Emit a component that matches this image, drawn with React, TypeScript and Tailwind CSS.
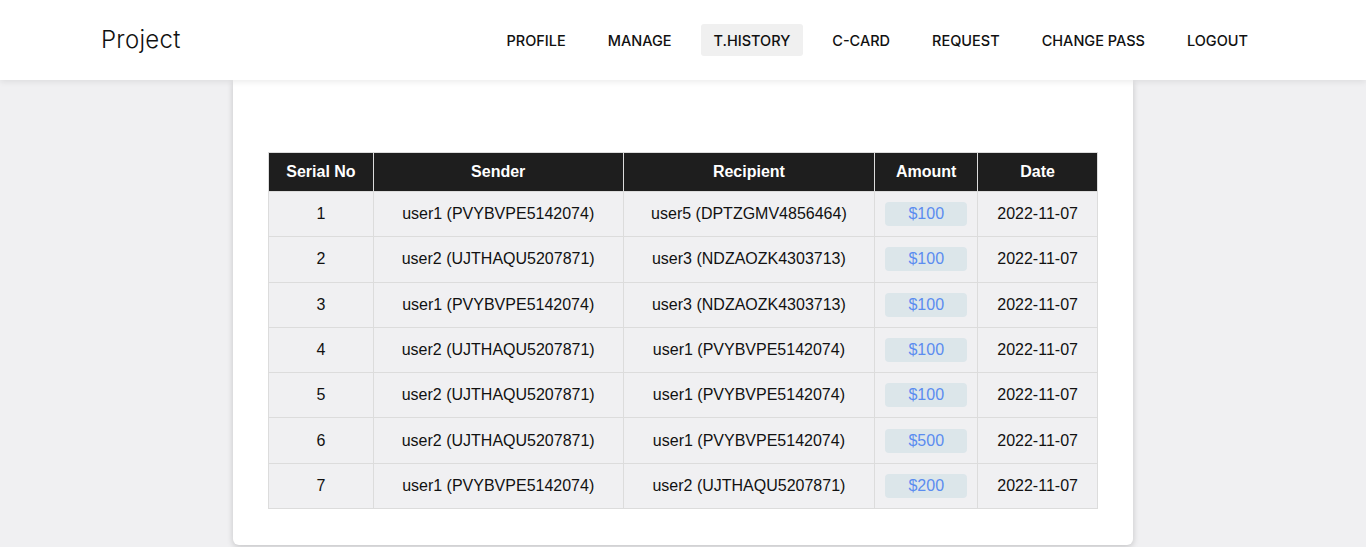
import React from 'react';

const navItems = ['PROFILE', 'MANAGE', 'T.HISTORY', 'C-CARD', 'REQUEST', 'CHANGE PASS', 'LOGOUT'];

const transactions = [
    { sender: 'user1 (PVYBVPE5142074)', recipient: 'user5 (DPTZGMV4856464)', amount: 100, date: '2022-11-07' },
    { sender: 'user2 (UJTHAQU5207871)', recipient: 'user3 (NDZAOZK4303713)', amount: 100, date: '2022-11-07' },
    { sender: 'user1 (PVYBVPE5142074)', recipient: 'user3 (NDZAOZK4303713)', amount: 100, date: '2022-11-07' },
    { sender: 'user2 (UJTHAQU5207871)', recipient: 'user1 (PVYBVPE5142074)', amount: 100, date: '2022-11-07' },
    { sender: 'user2 (UJTHAQU5207871)', recipient: 'user1 (PVYBVPE5142074)', amount: 100, date: '2022-11-07' },
    { sender: 'user2 (UJTHAQU5207871)', recipient: 'user1 (PVYBVPE5142074)', amount: 500, date: '2022-11-07' },
    { sender: 'user1 (PVYBVPE5142074)', recipient: 'user2 (UJTHAQU5207871)', amount: 200, date: '2022-11-07' },
];

export default function App() {
    const active = 'T.HISTORY';

    return (
        <div className="min-h-[547px] bg-[#f0f0f2] font-['Liberation_Sans',Arial,sans-serif]">
            {/* Top navigation */}
            <header className="relative z-10 flex h-20 items-center justify-between bg-white pl-[101px] pr-[105px] shadow-[0_2px_6px_rgba(0,0,0,0.08)]">
                <div className="font-['Inter',sans-serif] text-[24px] font-light tracking-[0.3px] text-[#111]">Project</div>
                <nav className="flex items-center gap-4">
                    {navItems.map((item) => (
                        <a
                            key={item}
                            className={`flex h-8 items-center rounded-[3px] px-[13px] pt-px font-['Inter',sans-serif] text-[14.5px] font-medium text-[#111] ${
                                item === active ? 'bg-[#f0f0f0]' : ''
                            }`}
                        >
                            {item}
                        </a>
                    ))}
                </nav>
            </header>

            {/* Transaction history card */}
            <main className="flex justify-center">
                <div className="w-[900px] rounded-b-md bg-white px-[35px] pb-[36px] pt-[72px] shadow-[0_2px_6px_rgba(0,0,0,0.18)]">
                    <table className="w-[830px] border-collapse text-center text-[16px] text-[#111]">
                        <thead>
                            <tr className="h-[39px] bg-[#1e1e1e] font-bold text-white">
                                <th className="w-[105px] border border-[#dcdcdc]">Serial No</th>
                                <th className="w-[250px] border border-[#dcdcdc]">Sender</th>
                                <th className="w-[252px] border border-[#dcdcdc]">Recipient</th>
                                <th className="w-[103px] border border-[#dcdcdc]">Amount</th>
                                <th className="w-[120px] border border-[#dcdcdc]">Date</th>
                            </tr>
                        </thead>
                        <tbody>
                            {transactions.map((t, i) => (
                                <tr key={i} className="h-[45.3px] bg-[#f0f0f2]">
                                    <td className="border border-[#dcdcdc]">{i + 1}</td>
                                    <td className="border border-[#dcdcdc]">{t.sender}</td>
                                    <td className="border border-[#dcdcdc]">{t.recipient}</td>
                                    <td className="border border-[#dcdcdc]">
                                        <span className="mx-auto flex h-6 w-[82px] items-center justify-center rounded-[4px] bg-[#dce6ea] text-[#5b8cf0]">
                                            ${t.amount}
                                        </span>
                                    </td>
                                    <td className="border border-[#dcdcdc]">{t.date}</td>
                                </tr>
                            ))}
                        </tbody>
                    </table>
                </div>
            </main>
        </div>
    );
}
